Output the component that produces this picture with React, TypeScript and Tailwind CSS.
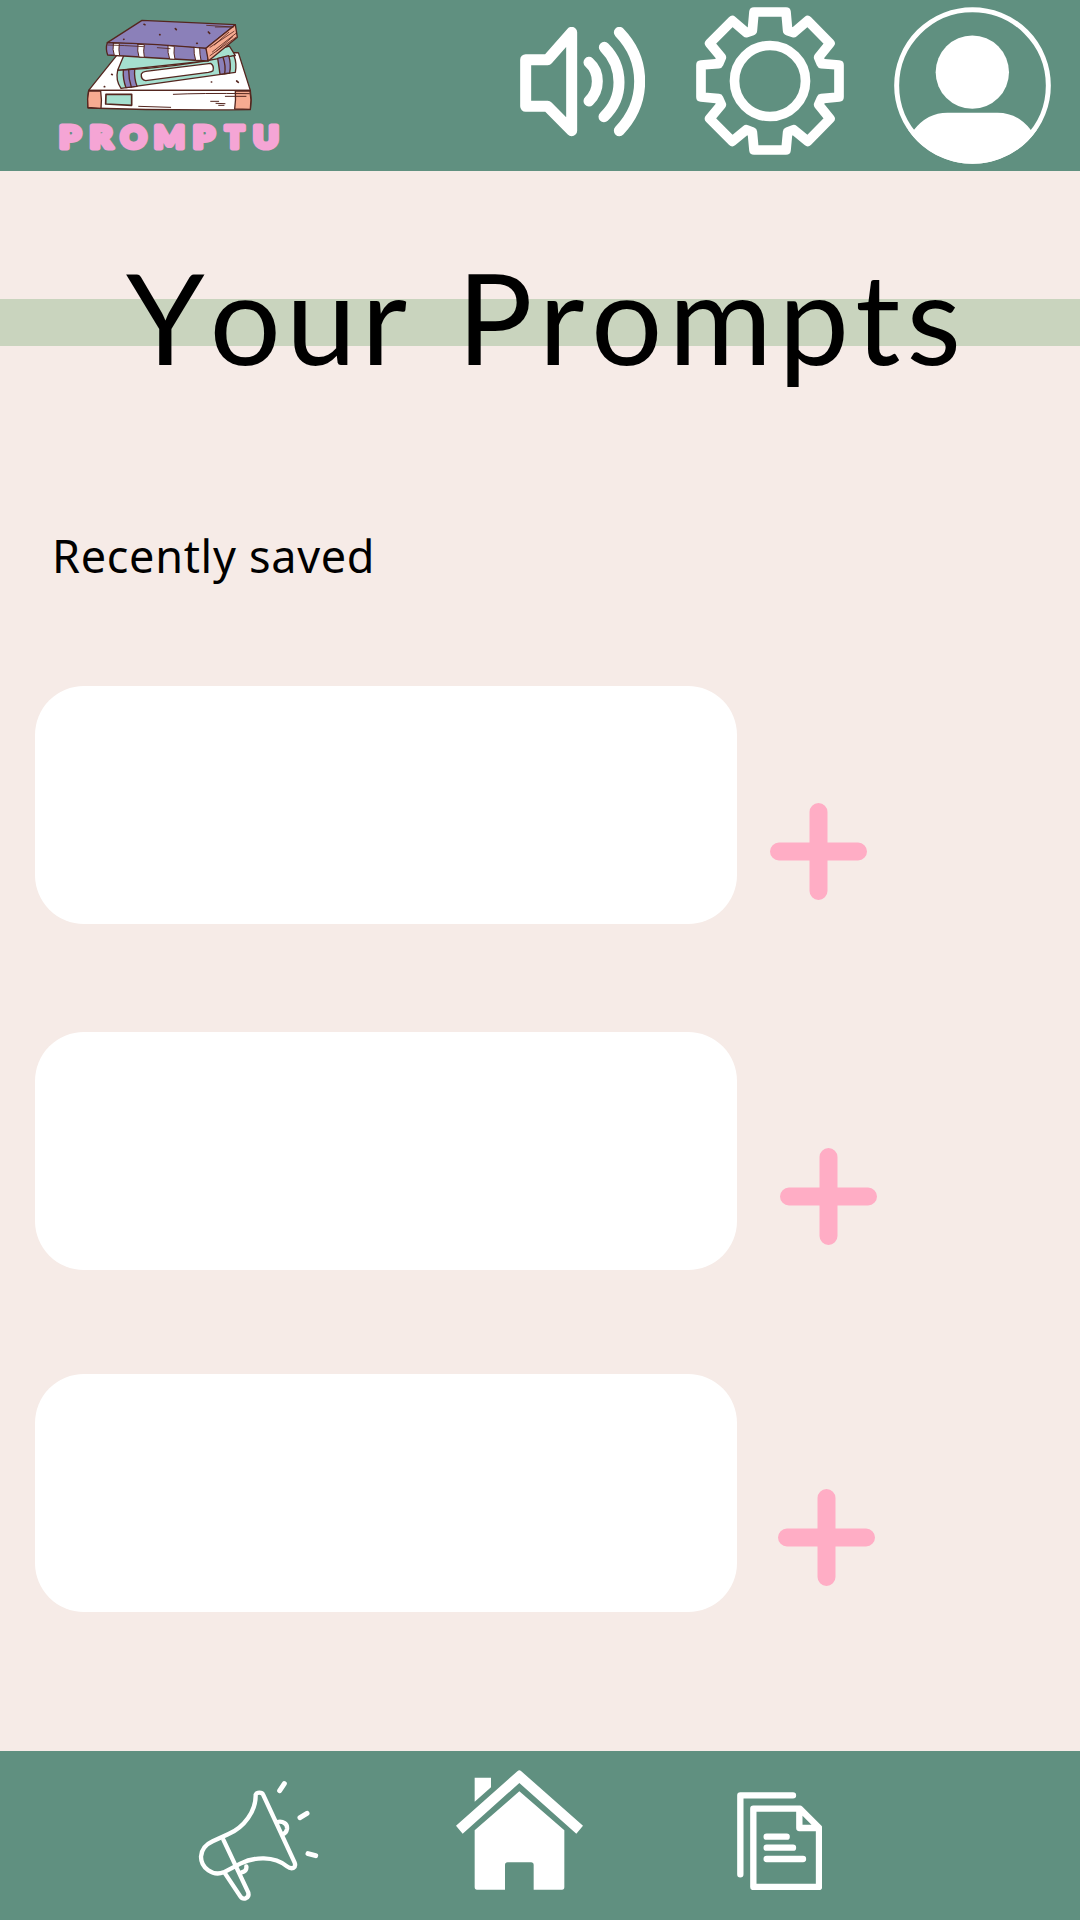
import React from "react";

function Logo() {
  return (
    <svg className="ml-[50px] mt-[10px] h-[150px] w-[240px] shrink-0" viewBox="0 0 720 450" stroke="#54261f" strokeWidth="4" strokeLinejoin="round" strokeLinecap="round">
      <path d="M205 130L116 241L601 241L565 128Z" fill="#fff" />
      <path d="M116 241L601 241Q606 270 601 299Q350 302 114 294Q111 265 116 241Z" fill="#fff" />
      <path d="M116 243H152Q156 270 153 295L114 292Q111 265 116 243Z" fill="#f7ab91" />
      <path d="M556 243H600Q605 270 601 298L554 297Q558 270 556 243Z" fill="#f7ab91" />
      <path d="M168 253H245V286L167 282Z" fill="#a5dfcf" strokeWidth="5" />
      <path d="M370 253Q450 249 598 251M526 259H588M266 289L362 292M482 274H506M498 280L525 281M506 286H522" fill="none" strokeWidth="3" />
      <path d="M222 135L203 181L500 150L556 137L538 108L460 130Z" fill="#a5dfcf" />
      <path d="M203 181Q375 174 552 137Q561 160 556 187L213 235Q196 210 203 181Z" fill="#a5dfcf" />
      <path d="M220 180L254 177Q252 205 261 229L228 233Q218 207 220 180ZM503 145L536 137Q544 162 539 189L510 193Q507 170 503 145Z" fill="#8b80b9" />
      <path d="M236 179Q236 208 244 231M519 142Q528 168 524 191" fill="none" />
      <path d="M287 184L482 160Q493 167 489 182Q486 185 475 187L287 212Q272 209 274 192Q277 185 287 184Z" fill="#fff" />
      <path d="M276 31L556 44L468 115Q325 106 172 98Z" fill="#8b80b9" />
      <path d="M172 98Q325 102 468 115Q476 135 473 153Q327 145 173 135Q166 115 172 98Z" fill="#8b80b9" />
      <path d="M556 44L562 82L475 153L468 115Z" fill="#f7ab91" />
      <g fill="#fff" strokeWidth="3">
        <path d="M190 100H208Q205 120 209 137L193 136Q187 120 190 100ZM264 103L283 104Q279 124 283 142L267 141Q261 124 264 103ZM354 107L373 109Q370 130 375 148L359 147Q352 128 354 107ZM432 112L449 114Q449 133 453 151L437 151Q431 132 432 112Z" />
      </g>
      <path d="M174 105Q220 106 282 110M322 113L360 116M470 46L548 51M496 51H550M480 112L552 64M487 126L558 70M480 137L558 82M493 105L536 67M500 123L548 80" fill="none" strokeWidth="2.5" />
      <path d="M282 43L285 44M376 56L379 59M329 74H330M221 88H222M440 100H442M475 66L479 70M185 193L187 194M163 230H164M484 216H485M560 213L565 217" fill="none" strokeWidth="5" />
      <g fill="#f5a5d5" stroke="#f5a5d5" strokeWidth="15" fontFamily="Lato, sans-serif" fontWeight="900" fontSize="93">
        <text x="28" y="415" textLength="64" lengthAdjust="spacingAndGlyphs">P</text>
        <text x="119" y="415" textLength="68" lengthAdjust="spacingAndGlyphs">R</text>
        <text x="212" y="415" textLength="77" lengthAdjust="spacingAndGlyphs">O</text>
        <text x="312" y="415" textLength="92" lengthAdjust="spacingAndGlyphs">M</text>
        <text x="429" y="415" textLength="64" lengthAdjust="spacingAndGlyphs">P</text>
        <text x="526" y="415" textLength="56" lengthAdjust="spacingAndGlyphs">T</text>
        <text x="610" y="415" textLength="76" lengthAdjust="spacingAndGlyphs">U</text>
      </g>
    </svg>
  );
}

function Speaker() {
  return (
    <svg className="ml-[230px] mt-[27px] h-[110px] w-[125px] shrink-0" viewBox="60 81 375 330" fill="none" stroke="#fff" strokeWidth="33" strokeLinecap="round" strokeLinejoin="round">
      <path d="M77 179H143L215 97V392L143 319H77Z" />
      <path d="M267 187Q292 209 292 244T267 303M313 142Q357 186 357 247T312 350M358 97Q419 160 419 244T358 392" />
    </svg>
  );
}

function Gear() {
  return (
    <svg className="ml-[51px] mt-[7px] h-[148px] w-[148px] shrink-0" viewBox="587 21 444 444" fill="none" stroke="#fff" strokeWidth="29" strokeLinejoin="round">
      <path d="M761 36H857L862 92L880 98L922 62L989 130L955 172L963 191L1016 195V291L963 296L955 314L989 356L922 424L880 389L862 396L857 450H761L756 396L738 389L696 424L628 356L663 314L655 296L602 291V195L655 191L663 172L628 130L696 62L738 98L756 92Z" />
      <circle cx="809" cy="243" r="106.5" />
    </svg>
  );
}

function Profile() {
  return (
    <svg className="ml-[50px] mt-[7px] h-[157px] w-[157px] shrink-0" viewBox="72 21 470 471" fill="#fff">
      <circle cx="307" cy="256.500" r="227.500" fill="none" stroke="#fff" strokeWidth="15" />
      <circle cx="306.500" cy="216.500" r="110" />
      <path d="M131 390Q171 338 232 338H382Q442 338 482 390L500 390A235 235 0 0 1 114 390Z" />
    </svg>
  );
}

function Plus({ className }: { className: string }) {
  return (
    <svg className={"size-[97px] shrink-0 " + className} viewBox="0 0 97 97" stroke="#ffadc5" strokeWidth="18" strokeLinecap="round">
      <path d="M9 48.500H88M48.500 9V88" />
    </svg>
  );
}

function Megaphone() {
  return (
    <svg className="ml-[198px] mt-[28.500px] h-[122px] w-[122px] shrink-0" viewBox="54 120 366 366" fill="none" stroke="#fff" strokeWidth="13" strokeLinecap="round" strokeLinejoin="round">
      <path d="M249 163L344 368Q348 379 340 384Q331 387 321 379C282 347 222 350 181 371L131 397C98 410 63 383 63 350C65 323 80 312 98 304L144 283C193 262 228 213 227 164Q229 158 238 158Q247 158 249 163Z" />
      <path d="M130 299L205 458Q208 470 197 475Q187 478 181 469L135 400" />
      <path d="M292 246C309 242 323 252 321 267Q319 279 308 283M185 397Q201 393 199 379" />
      <path d="M299 152L313 131M360 233L381 220M384 341L407 347" strokeWidth="15" />
    </svg>
  );
}

function Home() {
  return (
    <svg className="ml-[136px] mt-[19px] h-[120px] w-[127px] shrink-0" viewBox="49 91 381 360" fill="#fff">
      <path d="M105 114H154V143L105 186ZM234 94Q239 89 244 94L430 258L410 282L239 130L69 282L49 258ZM239 155L374 272V442Q374 450 367 450H282V376Q282 368 274 368H204Q196 368 196 376V450H112Q105 450 105 442V272Z" />
    </svg>
  );
}

function Documents() {
  return (
    <svg className="ml-[154px] mt-[41px] h-[98px] w-[85px] shrink-0" viewBox="51 156 255 294" fill="none" stroke="#fff" strokeWidth="19" strokeLinecap="round" strokeLinejoin="round">
      <path d="M61 403V166H219M140 290H200M140 323H219M140 357H249" />
      <path d="M100 206H240L297 263V441H100ZM238 206V264H297" />
    </svg>
  );
}

export default function App() {
  return (
    <div className="flex h-[1920px] w-[1080px] flex-col overflow-hidden bg-[#f6ebe7]">
      <header className="flex h-[171px] shrink-0 items-start bg-[#609080]">
        <Logo />
        <Speaker />
        <Gear />
        <Profile />
      </header>
      <main className="flex grow flex-col">
        <div className="mt-[128px] flex h-[47px] shrink-0 items-center bg-[#c9d4be]">
          <h1 className="mb-[12px] flex whitespace-pre pl-[126px] font-[Lato,sans-serif] text-[126px] leading-[150px] text-black [font-kerning:none]">
            <span className="w-[331px] tracking-[5px]">Your </span>
            <span className="tracking-[6.200px]">Prompts</span>
          </h1>
        </div>
        <h2 className="ml-[52px] mt-[180px] h-[60px] whitespace-nowrap font-['Noto_Sans',sans-serif] text-[45px] leading-[60px] tracking-[0.700px] text-black">Recently saved</h2>
        <section className="mt-[100px] flex flex-col pl-[34.500px]">
          <div className="flex h-[238px] items-start">
            <div className="h-[238px] w-[702.500px] rounded-[49px] bg-white" />
            <Plus className="ml-[33px] mt-[117px]" />
          </div>
          <div className="mt-[108px] flex h-[238px] items-start">
            <div className="h-[238px] w-[702.500px] rounded-[49px] bg-white" />
            <Plus className="ml-[43px] mt-[116px]" />
          </div>
          <div className="mt-[104px] flex h-[238px] items-start">
            <div className="h-[238px] w-[702.500px] rounded-[49px] bg-white" />
            <Plus className="ml-[41px] mt-[115px]" />
          </div>
        </section>
      </main>
      <footer className="flex h-[169px] shrink-0 items-start bg-[#609080]">
        <Megaphone />
        <Home />
        <Documents />
      </footer>
    </div>
  );
}
